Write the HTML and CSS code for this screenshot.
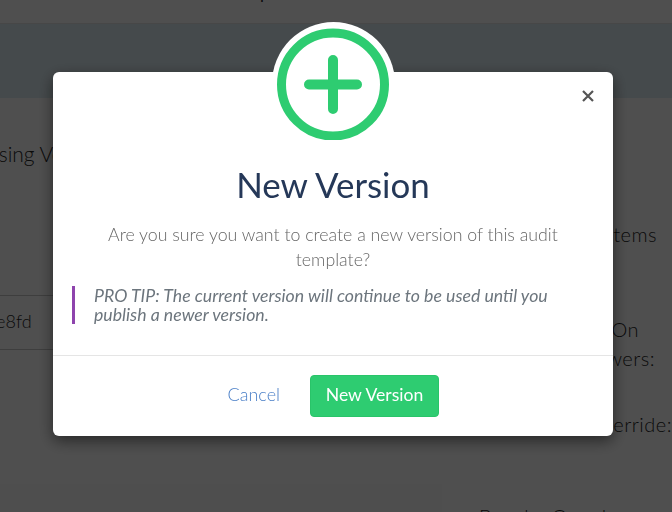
FILE: index.html
```html
<!DOCTYPE html>
<html lang="en">
<head>
<meta charset="utf-8">
<title>New Version</title>
<link rel="stylesheet" href="styles.css">
</head>
<body>
<div class="page">
  <header class="topbar"><span class="topbar-text">Template</span></header>
  <div class="band"></div>
  <main class="content">
    <section class="left">
      <p class="using">Using Version</p>
      <div class="hash-row">a7c3e8fd</div>
    </section>
    <section class="right">
      <p class="items">Items</p>
      <p class="on">On</p>
      <p class="answers">Answers:</p>
      <p class="override">Override:</p>
      <p class="bottom">Bonsha Oongle</p>
    </section>
  </main>
  <div class="faint"></div>
</div>
<div class="backdrop"></div>
<div class="modal">
  <div class="badge">
    <svg class="badge-icon" viewBox="0 0 112 112" width="112" height="112" fill="none" stroke="#2ecc71">
      <circle cx="56" cy="56.5" r="51.5" stroke-width="9"/>
      <path d="M56 32v49M32 56.5h48" stroke-width="10" stroke-linecap="round"/>
    </svg>
  </div>
  <button class="close" aria-label="Close">
    <svg viewBox="0 0 12 12" width="12" height="12" fill="none" stroke="#555" stroke-width="2.2"><path d="M1 1l10 10M11 1L1 11"/></svg>
  </button>
  <div class="modal-body">
    <h2 class="title">New Version</h2>
    <p class="question">Are you sure you want to create a new version of this audit template?</p>
    <blockquote class="tip">PRO TIP: The current version will continue to be used until you publish a newer version.</blockquote>
  </div>
  <div class="modal-footer">
    <a class="cancel">Cancel</a>
    <button class="confirm">New Version</button>
  </div>
</div>
</body>
</html>
```

FILE: styles.css
```css
* { box-sizing: border-box; }
html, body { margin: 0; height: 100%; overflow: hidden; }
body { font-family: Lato, "Open Sans", sans-serif; background: #fff; color: #222; }
.page { width: 672px; height: 512px; display: flex; flex-direction: column; position: relative; overflow: hidden; color: #262626; background: #fff; }
.topbar { height: 24px; flex: none; border-bottom: 1px solid #e6e6e6; display: flex; align-items: flex-start; padding-left: 229px; background: #fff; overflow: hidden; }
.topbar-text { font-size: 17px; line-height: 24px; transform: translateY(-19px); }
.band { height: 74px; flex: none; background: #dfeef4; }
.content { flex: 1; display: flex; justify-content: space-between; font-weight: 300; min-height: 0; }
.left { width: 60px; overflow: hidden; padding-top: 44px; }
.left p, .right p { margin: 0; white-space: nowrap; line-height: 24px; }
.using { font-size: 21px; margin-left: -16px !important; }
.hash-row { margin-top: 129px; height: 55px; line-height: 50px; font-size: 18px; border-top: 1px solid #c8c8c8; border-bottom: 1px solid #c8c8c8; text-indent: -42px; white-space: nowrap; }
.right { width: 202px; overflow: hidden; padding-top: 124px; font-size: 20px; letter-spacing: .5px; text-align: right; }
.items { margin-right: 15px !important; }
.on { margin-top: 71px !important; margin-right: 33px !important; }
.answers { margin-top: 5px !important; margin-right: 17px !important; }
.override { margin-top: 42px !important; margin-right: 0 !important; }
.bottom { margin-top: 68px !important; margin-left: 9px !important; text-align: left; }
.faint { position: absolute; left: 0; top: 484px; width: 442px; height: 28px; background: #fbfbfb; }
.backdrop { position: fixed; inset: 0; background: rgba(0,0,0,.69); }
.modal { position: fixed; left: 53px; top: 72px; width: 560px; height: 364px; background: #fff; border-radius: 6px; box-shadow: 0 5px 15px rgba(0,0,0,.5); display: flex; flex-direction: column; }
.badge { position: absolute; left: 219px; top: -50px; width: 123px; height: 123px; border-radius: 50%; background: #fff; display: flex; align-items: center; justify-content: center; padding: 1px 1px 0 0; }
.close { position: absolute; top: 18px; right: 19px; padding: 0; border: 0; background: none; display: flex; }
.modal-body { flex: 1; padding: 91px 19px 0; display: flex; flex-direction: column; }
.title { margin: 0; text-align: center; font-size: 34.9px; line-height: 44px; font-weight: 400; color: #253858; }
.question { margin: 15px 0 0; text-align: center; padding: 0 30px; font-size: 17.76px; font-weight: 300; line-height: 25px; color: #666; }
.tip { margin: 14px 0 0; padding: 0 20px 0 19px; border-left: 3px solid #8e44ad; font-size: 17.7px; line-height: 19px; font-style: italic; color: #6c757d; }
.modal-footer { height: 81px; flex: none; border-top: 1px solid #e5e5e5; display: flex; align-items: center; justify-content: flex-end; padding-right: 174px; padding-bottom: 1px; gap: 30px; }
.cancel { font-size: 18px; font-weight: 300; color: #4a7fc7; margin-bottom: 3px; }
.confirm { width: 129px; height: 42px; border: 1px solid #29c469; border-radius: 4px; background: #2ecc71; color: #fff; font: 400 17.6px Lato, "Open Sans", sans-serif; padding: 0 0 3px; }
```
